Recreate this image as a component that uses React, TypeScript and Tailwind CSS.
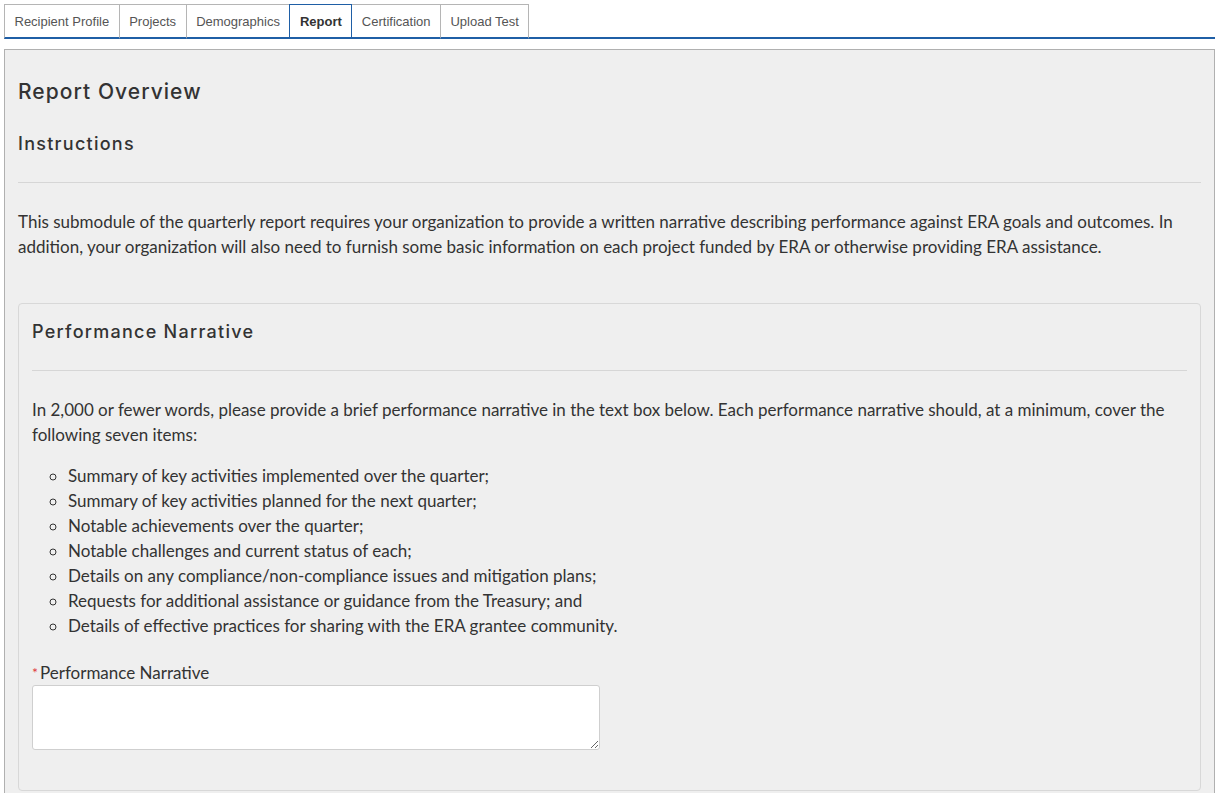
import React from 'react';

const tabs = ['Recipient Profile', 'Projects', 'Demographics', 'Report', 'Certification', 'Upload Test'];

const items = [
  'Summary of key activities implemented over the quarter;',
  'Summary of key activities planned for the next quarter;',
  'Notable achievements over the quarter;',
  'Notable challenges and current status of each;',
  'Details on any compliance/non-compliance issues and mitigation plans;',
  'Requests for additional assistance or guidance from the Treasury; and',
  'Details of effective practices for sharing with the ERA grantee community.',
];

const heading = "font-['Inter',sans-serif] text-[#333] font-medium";

export default function App() {
  return (
    <div className="min-h-screen bg-white px-[4px] pt-[4px] font-['Lato',sans-serif] text-[#333]">
      <div className="flex border-b-2 border-[#1f5fa6] pr-[1px]">
        {tabs.map((t) => {
          const active = t === 'Report';
          return (
            <div
              key={t}
              className={`-mb-[2px] -ml-[1px] first:ml-0 h-[35px] border px-[9.5px] pt-[2px] flex items-center font-['Liberation_Sans',Arial,sans-serif] text-[13px] ${
                active
                  ? 'border-[#1f5fa6] border-b-2 font-bold text-[#333] z-10'
                  : 'border-[#b5b5b5] border-b-2 border-b-[#1f5fa6] text-[#555]'
              }`}
            >
              {t}
            </div>
          );
        })}
      </div>

      <div className="mt-[10px] border border-[#b0b0b0] bg-[#efefef] px-[13px] pt-[28px] pb-[10px]">
        <h1 className={`${heading} text-[21px] leading-[28px] tracking-[0.05em]`}>Report Overview</h1>
        <h2 className={`${heading} text-[18px] leading-[24px] tracking-[0.07em] mt-[26px]`}>Instructions</h2>
        <hr className="mt-[26px] border-t border-[#d6d6d6]" />
        <p className="mt-[26px] text-[17px] leading-[25px]">
          This submodule of the quarterly report requires your organization to provide a written narrative describing performance against ERA goals and outcomes. In addition, your organization will also need to furnish some basic information on each project funded by ERA or otherwise providing ERA assistance.
        </p>

        <div className="mt-[44px] rounded-[4px] border border-[#d8d8d8] bg-[#efefef] px-[13px] pt-[16px] pb-[40px]">
          <h3 className={`${heading} text-[18px] leading-[24px] tracking-[0.07em]`}>Performance Narrative</h3>
          <hr className="mt-[26px] border-t border-[#d6d6d6]" />
          <p className="mt-[26px] text-[17px] leading-[25px]">
            In 2,000 or fewer words, please provide a brief performance narrative in the text box below. Each performance narrative should, at a minimum, cover the following seven items:
          </p>
          <ul className="mt-[16px] list-[circle] pl-[36px] text-[17px] leading-[25px]">
            {items.map((i) => (
              <li key={i}>{i}</li>
            ))}
          </ul>
          <div className="mt-[22px] text-[17px] leading-[25px]">
            <span className="text-[#e0393e] text-[14px] align-top mr-[2px]">*</span>Performance Narrative
          </div>
          <textarea className="block h-[65px] w-[568px] rounded-[3px] border border-[#cfcfcf] bg-white" />
        </div>
      </div>
    </div>
  );
}
